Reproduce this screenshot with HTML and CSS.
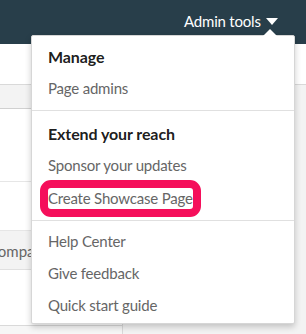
FILE: index.html
```html
<!DOCTYPE html>
<html lang="en">
<head>
    <meta charset="UTF-8">
    <meta name="viewport" content="width=device-width, initial-scale=1.0">
    <title>Admin tools</title>
    <link rel="stylesheet" href="styles.css">
</head>
<body>
    <header class="topbar">
        <nav class="topnav">
            <span class="nav-item">Admin tools
                <svg class="caret" width="12" height="7" viewBox="0 0 12 7"><path d="M0 0h12L6 7z" fill="#fff"/></svg>
            </span>
            <span class="nav-item">Content</span>
        </nav>
    </header>

    <div class="subbar"></div>

    <main class="page">
        <div class="side-card">
            <div class="side-block tall"></div>
            <div class="side-block"></div>
            <div class="side-band">Company</div>
            <div class="side-block low"></div>
        </div>
        <div class="bottom-row">
            <div class="bottom-left"></div>
            <div class="bottom-right"></div>
        </div>
    </main>

    <!-- dropdown opened from "Admin tools" -->
    <div class="dropdown">
        <div class="menu-section first">
            <h3 class="menu-title">Manage</h3>
            <a class="menu-item">Page admins</a>
        </div>
        <div class="menu-section second">
            <h3 class="menu-title">Extend your reach</h3>
            <a class="menu-item">Sponsor your updates</a>
            <a class="menu-item"><span class="highlight">Create Showcase Page</span></a>
        </div>
        <div class="menu-section third">
            <a class="menu-item">Help Center</a>
            <a class="menu-item">Give feedback</a>
            <a class="menu-item">Quick start guide</a>
        </div>
    </div>
</body>
</html>
```

FILE: styles.css
```css
body {
    margin: 0;
    font-family: 'Lato', 'Open Sans', sans-serif;
    background-color: #f3f3f3;
    overflow: hidden;
    height: 334px;
    position: relative;
}
.topbar {
    height: 44px;
    background-color: #283e4a;
    overflow: hidden;
}
.topnav {
    display: flex;
    gap: 28px;
    padding-left: 184px;
    white-space: nowrap;
}
.nav-item {
    color: #fff;
    font-size: 15px;
    letter-spacing: -0.2px;
    line-height: 42px;
    display: flex;
    align-items: center;
}
.caret {
    margin-left: 5px;
}
.subbar {
    height: 40px;
    background-color: #fff;
    border-bottom: 1px solid #d9d9d9;
}
.page {
    padding-top: 23px;
}
.side-card {
    width: 122px;
    background-color: #fff;
    border-top: 1px solid #d0d0d0;
    border-right: 1px solid #d9d9d9;
}
.side-block {
    height: 48px;
    border-bottom: 1px solid #e6e6e6;
}
.side-block.tall {
    height: 72px;
}
.side-block.low {
    height: 55px;
    border-bottom: 1px solid #d9d9d9;
}
.side-band {
    height: 38px;
    line-height: 40px;
    background-color: #f3f3f3;
    border-bottom: 1px solid #e0e0e0;
    color: #666;
    font-size: 15px;
    text-indent: -12px;
    overflow: hidden;
}
.bottom-row {
    display: flex;
    height: 20px;
}
.bottom-left {
    width: 122px;
    background-color: #f6f6f6;
}
.bottom-right {
    flex: 1;
    border-left: 1px solid #d9d9d9;
    background-color: #f3f3f3;
}
.dropdown {
    position: absolute;
    left: 31px;
    top: 35px;
    width: 262px;
    background-color: #fff;
    border: 1px solid #d6d6d6;
    border-radius: 2px;
    box-shadow: 0 3px 6px rgba(0,0,0,0.2);
}
.dropdown::before {
    content: '';
    position: absolute;
    top: -7px;
    left: 231px;
    border-left: 7px solid transparent;
    border-right: 7px solid transparent;
    border-bottom: 7px solid #fff;
}
.menu-section {
    padding: 6px 16px 6px 16px;
    border-bottom: 1px solid #e0e0e0;
}
.menu-section.second {
    padding-top: 8px;
    padding-bottom: 7px;
}
.menu-section.third {
    padding-top: 4px;
    padding-bottom: 2px;
    border-bottom: none;
}
.menu-title {
    margin: 0;
    font-size: 16px;
    font-weight: 700;
    letter-spacing: -0.1px;
    line-height: 30px;
    color: rgba(0,0,0,0.9);
}
.menu-item {
    display: block;
    font-size: 15px;
    letter-spacing: -0.2px;
    line-height: 32px;
    color: #666;
}
.highlight {
    display: inline-block;
    vertical-align: top;
    margin-top: 7px;
    line-height: 20px;
    padding-bottom: 1px;
    outline: 8px solid #f50f5b;
    border-radius: 3px;
}
```
